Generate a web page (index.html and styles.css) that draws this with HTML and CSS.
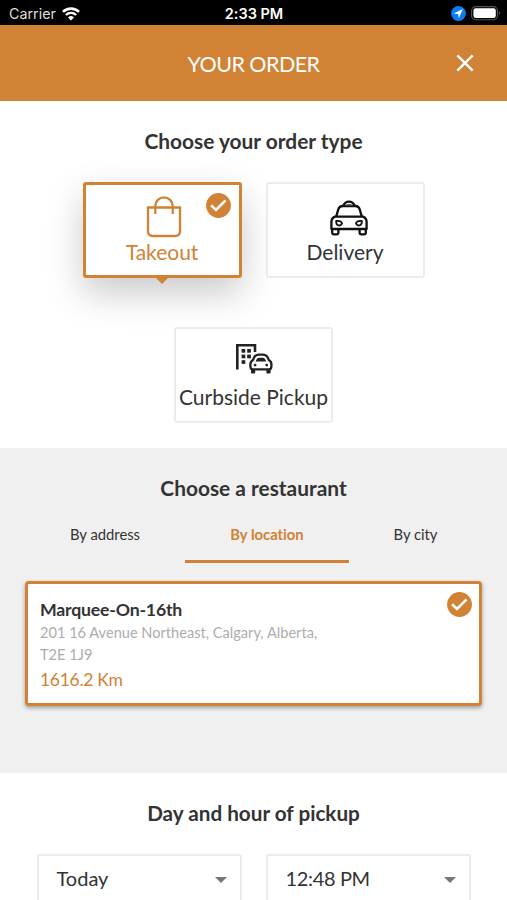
FILE: index.html
```html
<!DOCTYPE html>
<html lang="en">
<head>
    <meta charset="UTF-8">
    <meta name="viewport" content="width=device-width, initial-scale=1.0">
    <title>Your order</title>

    <link rel="stylesheet" href="styles.css">
</head>
<body>
    <div id="status_bar">
        <div class="status_left">
            <span class="carrier">Carrier</span>
            <svg class="wifi" viewBox="0 0 18 14" width="18" height="14">
                <path d="M1 4.9 A11.4 11.4 0 0 1 17 4.9" fill="none" stroke="#fff" stroke-width="2.6"/>
                <path d="M3.9 8 A7.3 7.3 0 0 1 14.1 8" fill="none" stroke="#fff" stroke-width="2.4"/>
                <path d="M6 10.5 A4.3 4.3 0 0 1 12 10.5 L9 13.6 Z" fill="#fff"/>
            </svg>
        </div>
        <span class="clock">2:33 PM</span>
        <div class="status_right">
            <svg viewBox="0 0 15 15" width="15" height="15">
                <circle cx="7.5" cy="7.5" r="7.4" fill="#0a7df5"/>
                <path d="M11.9 3.1 L2.6 7.4 L7.2 7.9 L7.8 12.3 Z" fill="#fff"/>
            </svg>
            <svg viewBox="0 0 30 15" width="30" height="15">
                <rect x="0.6" y="0.6" width="25.8" height="13.2" rx="4" fill="none" stroke="#555" stroke-width="1.1"/>
                <rect x="2.4" y="2.3" width="22.4" height="9.8" rx="2.3" fill="#fff"/>
                <path d="M27.8 4.8 A3 3 0 0 1 27.8 9.6 Z" fill="#555"/>
            </svg>
        </div>
    </div>

    <header id="header">
        <h1>YOUR ORDER</h1>
        <svg class="close" viewBox="0 0 18 18" width="18" height="18">
            <path d="M1.3 1.3 L16.7 16.7 M16.7 1.3 L1.3 16.7" stroke="#fff" stroke-width="2.4"/>
        </svg>
    </header>

    <section id="order_type">
        <h2>Choose your order type</h2>
        <div class="types">
            <div class="type selected">
                <svg class="icon" viewBox="0 0 36 42" width="36" height="42">
                    <path d="M2 11.5 H34 V35 Q34 40 29 40 H7 Q2 40 2 35 Z" fill="none" stroke="#d18235" stroke-width="2.3"/>
                    <path d="M9.3 18 V10 A8.7 8.7 0 0 1 26.7 10 V18" fill="none" stroke="#d18235" stroke-width="2.3"/>
                </svg>
                <span>Takeout</span>
                <svg class="check" viewBox="0 0 25 25" width="25" height="25">
                    <circle cx="12.5" cy="12.5" r="12.4" fill="#d18235"/>
                    <path d="M5.1 12.3 L10 17 L19.6 7.4" fill="none" stroke="#fff" stroke-width="2.6"/>
                </svg>
            </div>
            <div class="type delivery">
                <svg class="icon" viewBox="0 0 38 36" width="38" height="36">
                    <g fill="none" stroke="#111" stroke-width="2.3" stroke-linejoin="round">
                        <path d="M13.3 5.7 Q15 1.6 19 1.6 Q23 1.6 24.7 5.7"/>
                        <path d="M6.2 16.6 L8.2 9.6 Q9.3 6 13 6 H25 Q28.7 6 29.8 9.6 L31.8 16.6"/>
                        <path d="M5 16.6 H33 Q36.6 18 36.6 22 V29 H1.4 V22 Q1.4 18 5 16.6 Z"/>
                        <path d="M2.2 29 V32.5 Q2.2 34.4 4 34.4 H6.4 Q8.4 34.4 8.4 32.5 V29"/>
                        <path d="M29.6 29 V32.5 Q29.6 34.4 31.6 34.4 H34 Q35.8 34.4 35.8 32.5 V29"/>
                        <path d="M6.2 20.9 Q11.6 20.4 12 23.6 Q10.9 25.7 8.6 25.4 Q6 25 6.2 20.9 Z" stroke-width="1.9"/>
                        <path d="M31.8 20.9 Q26.4 20.4 26 23.6 Q27.1 25.7 29.4 25.4 Q32 25 31.8 20.9 Z" stroke-width="1.9"/>
                    </g>
                    <path d="M15 5.5 Q19 2 23 5.5 Z" fill="#666"/>
                </svg>
                <span>Delivery</span>
            </div>
            <div class="type curbside">
                <svg class="icon" viewBox="0 0 38 31" width="38" height="31">
                    <path d="M2.3 26.5 V2.3 H20 V9" fill="none" stroke="#222" stroke-width="2.6"/>
                    <g fill="#222">
                        <rect x="6.6" y="6" width="3.7" height="3.7"/>
                        <rect x="12.2" y="6" width="3.7" height="3.7"/>
                        <rect x="6.6" y="11.6" width="3.7" height="3.7"/>
                        <rect x="12.2" y="11.6" width="3.7" height="3.7"/>
                        <rect x="6.6" y="17.2" width="3.7" height="3.7"/>
                        <rect x="16" y="26" width="4.2" height="4.4" rx="1"/>
                        <rect x="31.4" y="26" width="4.2" height="4.4" rx="1"/>
                        <path d="M20.6 18.6 Q21.6 14.8 24 14.8 H27.8 Q30.2 14.8 31.2 18.6 Z"/>
                        <circle cx="20.1" cy="22.1" r="1.4"/>
                        <circle cx="31.7" cy="22.1" r="1.4"/>
                    </g>
                    <path d="M18 17 L19.2 14.2 Q21 11.6 24 11.6 H27.8 Q30.8 11.6 32.6 14.2 L33.8 17 Q36.9 18.4 36.4 23 Q36.4 26.4 34 26.4 H17.8 Q15.4 26.4 15.4 23 Q14.9 18.4 18 17 Z" fill="none" stroke="#222" stroke-width="2.3"/>
                </svg>
                <span>Curbside Pickup</span>
            </div>
        </div>
    </section>

    <section id="restaurant">
        <h2>Choose a restaurant</h2>
        <div class="tabs">
            <div class="tab address">By address</div>
            <div class="tab active">By location</div>
            <div class="tab city">By city</div>
        </div>
        <div class="restaurant_card">
            <h3>Marquee-On-16th</h3>
            <p>201 16 Avenue Northeast, Calgary, Alberta,<br>T2E 1J9</p>
            <div class="distance">1616.2 Km</div>
            <svg class="check" viewBox="0 0 25 25" width="25" height="25">
                <circle cx="12.5" cy="12.5" r="12.4" fill="#d18235"/>
                <path d="M5.1 12.3 L10 17 L19.6 7.4" fill="none" stroke="#fff" stroke-width="2.6"/>
            </svg>
        </div>
    </section>

    <section id="pickup_time">
        <h2>Day and hour of pickup</h2>
        <div class="selects">
            <div class="select"><span>Today</span><i class="arrow"></i></div>
            <div class="select hour"><span>12:48 PM</span><i class="arrow"></i></div>
        </div>
    </section>
</body>
</html>
```
FILE: styles.css
```css
* {
    margin: 0;
    padding: 0;
    box-sizing: border-box;
}

html, body {
    height: 100%;
    overflow: hidden;
}

body {
    background-color: #fff;
    color: #333;
    font-family: Lato, "Liberation Sans", sans-serif;
    font-variant-ligatures: none;
}

svg {
    display: block;
    flex-shrink: 0;
}

/* status bar */
#status_bar {
    display: grid;
    grid-template-columns: 1fr auto 1fr;
    align-items: center;
    height: 25px;
    padding: 2px 6px 0 9px;
    background-color: #000;
    color: #fff;
    font-family: Inter, "Liberation Sans", sans-serif;
}

.status_left, .status_right {
    display: flex;
    align-items: center;
    gap: 6px;
}

.carrier {
    color: #ddd;
    font-size: 14.3px;
}

.clock {
    margin-right: 2px;
    font-size: 14.5px;
    font-weight: 600;
}

.status_right {
    justify-content: flex-end;
    gap: 5px;
}

/* header */
#header {
    display: flex;
    align-items: center;
    height: 76px;
    padding: 0 33px 0 51px;
    background-color: #d18235;
    color: #fff;
}

#header h1 {
    flex: 1;
    padding-top: 1px;
    text-align: center;
    font-size: 21.5px;
    font-weight: 400;
    letter-spacing: -0.55px;
}

h2 {
    text-align: center;
    font-size: 20.9px;
    line-height: 26px;
    font-weight: 700;
}

/* order type */
#order_type {
    height: 347px;
    padding-top: 27px;
}

.types {
    display: flex;
    flex-wrap: wrap;
    justify-content: center;
    gap: 49px 24px;
    padding: 28px 60px 0;
}

.type {
    position: relative;
    display: flex;
    flex-direction: column;
    align-items: center;
    justify-content: flex-end;
    width: 159px;
    height: 96px;
    padding-bottom: 11px;
    border: 2px solid #ececec;
    border-radius: 3px;
    background-color: #fff;
    font-size: 21px;
    line-height: 26px;
    white-space: nowrap;
}

.delivery .icon {
    margin: 0 0 3px 7px;
}

.curbside .icon {
    margin-bottom: 10px;
}

.type.selected {
    border: 3px solid #d18235;
    padding-bottom: 10px;
    color: #d18235;
    box-shadow: 0 15px 36px rgba(0, 0, 0, 0.21);
}

.type.selected .icon {
    margin: 0 0 1px 3px;
}

.type.selected::after {
    content: "";
    position: absolute;
    top: 100%;
    left: 50%;
    margin: 2px 0 0 -7px;
    border: 7px solid transparent;
    border-top-color: #d18235;
    border-bottom: 0;
}

.check {
    position: absolute;
    top: 8px;
    right: 8px;
}

/* restaurant */
#restaurant {
    height: 325px;
    padding: 27px 25px 0;
    background-color: #f0f0f0;
}

.tabs {
    display: flex;
    height: 62px;
}

.tab {
    width: 164px;
    padding-top: 23px;
    text-align: center;
    font-size: 14.8px;
    line-height: 20px;
}

.tab.address {
    width: 160px;
}

.tab.city {
    width: 133px;
}

.tab.active {
    color: #d18235;
    font-weight: 700;
    border-bottom: 3px solid #d18235;
}

.restaurant_card {
    position: relative;
    height: 125px;
    margin-top: 18px;
    padding: 15px 12px 0;
    border: 3px solid #d18235;
    border-radius: 4px;
    background-color: #fff;
    box-shadow: 0 2px 4px rgba(0, 0, 0, 0.35);
}

.restaurant_card .check {
    right: 7px;
}

.restaurant_card h3 {
    font-size: 17.7px;
    line-height: 22px;
    letter-spacing: -0.2px;
}

.restaurant_card p {
    padding-top: 1px;
    color: #adadad;
    font-size: 14.6px;
    line-height: 22px;
}

.restaurant_card .distance {
    margin-top: 2px;
    color: #d18235;
    font-size: 17.5px;
    line-height: 24px;
    letter-spacing: -0.3px;
}

/* day and hour */
#pickup_time {
    padding-top: 27px;
}

#pickup_time h2 {
    font-size: 20.7px;
}

.selects {
    display: flex;
    justify-content: center;
    gap: 24px;
    padding-top: 28px;
}

.select {
    display: flex;
    align-items: center;
    justify-content: space-between;
    width: 205px;
    height: 52px;
    padding: 0 13px 4px 18px;
    border: 2px solid #ececec;
    border-radius: 2px;
    font-size: 20px;
}

.select.hour span {
    letter-spacing: -0.35px;
}

.arrow {
    margin-top: 3px;
    border: 6px solid transparent;
    border-top-color: #777;
    border-bottom: 0;
}
```
